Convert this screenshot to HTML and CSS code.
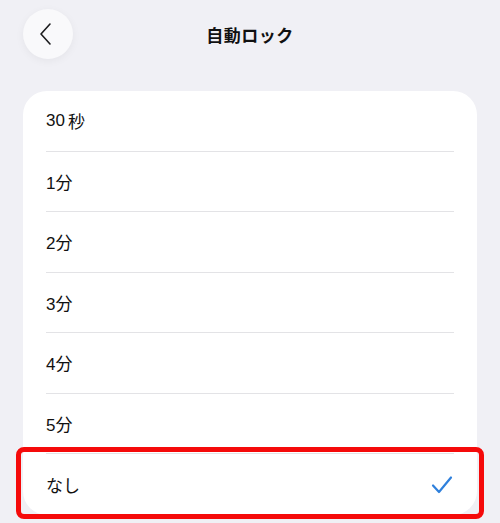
FILE: index.html
```html
<!DOCTYPE html>
<html lang="ja">
<head>
<meta charset="utf-8">
<link rel="stylesheet" href="styles.css">
</head>
<body>
<div class="page">
  <header class="header">
    <button class="back" aria-label="戻る">
      <svg width="14" height="24" viewBox="0 0 14 24"><path d="M11 2 L2 12 L11 22" fill="none" stroke="#1c1c1e" stroke-width="1.6" stroke-linecap="round" stroke-linejoin="round"/></svg>
    </button>
    <h1 class="title">自動ロック</h1>
  </header>
  <ul class="card">
    <li class="row">30<span class="gap"></span>秒</li>
    <li class="row">1分</li>
    <li class="row">2分</li>
    <li class="row">3分</li>
    <li class="row">4分</li>
    <li class="row">5分</li>
    <li class="row last">なし
      <svg class="check" width="22" height="20" viewBox="0 0 22 20"><path d="M2 10.5 L8 17 L20 2.5" fill="none" stroke="#2f80dc" stroke-width="2.2" stroke-linecap="round" stroke-linejoin="round"/></svg>
    </li>
  </ul>
  <div class="highlight"></div>
</div>
</body>
</html>
```
FILE: styles.css
```css
* { box-sizing: border-box; }
html, body { margin: 0; padding: 0; }
body {
  width: 500px;
  height: 523px;
  overflow: hidden;
  background: #f0f0f5;
  font-family: "Liberation Sans", "Noto Sans CJK JP", sans-serif;
  color: #111;
}
.page {
  position: relative;
  height: 523px;
  padding: 9px 23px 0;
}
.header {
  position: relative;
  height: 50px;
  display: flex;
  align-items: center;
  justify-content: center;
}
.back {
  position: absolute;
  left: 0;
  top: 0;
  width: 50px;
  height: 50px;
  border-radius: 50%;
  border: none;
  background: #f9f9fb;
  box-shadow: 0 2px 8px rgba(0, 0, 0, 0.05);
  display: flex;
  align-items: center;
  justify-content: center;
  padding: 0 4px 0 0;
}
.title {
  margin: 0;
  font-size: 17px;
  font-weight: 700;
  letter-spacing: 0.5px;
  color: #111;
}
.card {
  list-style: none;
  margin: 32px 0 0;
  padding: 0 23px;
  background: #fff;
  border-radius: 24px;
  width: 454px;
}
.row {
  height: 60.5px;
  display: flex;
  align-items: center;
  font-size: 17px;
  border-bottom: 1px solid #e3e3e6;
  position: relative;
}
.row.last { border-bottom: none; }
.gap { display: inline-block; width: 3px; }
.check {
  position: absolute;
  right: 1px;
  top: 21px;
}
.highlight {
  position: absolute;
  left: 16px;
  top: 447px;
  width: 468px;
  height: 72px;
  border: 5px solid #f50a0a;
  border-radius: 8px;
}
```
